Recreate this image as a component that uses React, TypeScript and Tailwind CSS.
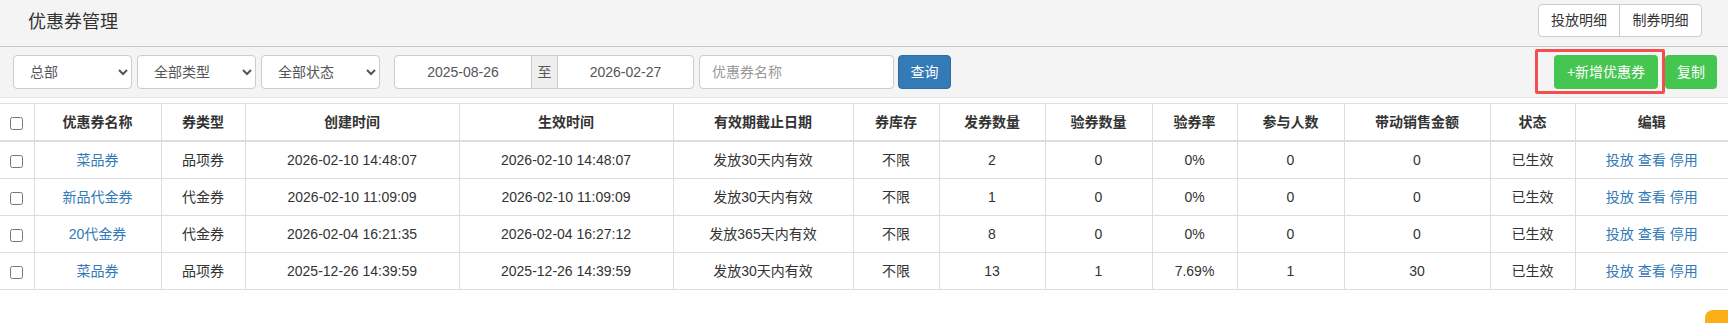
import React from "react";

interface Coupon {
  name: string;
  type: string;
  created: string;
  effective: string;
  expiry: string;
  stock: string;
  issued: number;
  verified: number;
  rate: string;
  people: number;
  sales: number;
  status: string;
}

const coupons: Coupon[] = [
  { name: "菜品券", type: "品项券", created: "2026-02-10 14:48:07", effective: "2026-02-10 14:48:07", expiry: "发放30天内有效", stock: "不限", issued: 2, verified: 0, rate: "0%", people: 0, sales: 0, status: "已生效" },
  { name: "新品代金券", type: "代金券", created: "2026-02-10 11:09:09", effective: "2026-02-10 11:09:09", expiry: "发放30天内有效", stock: "不限", issued: 1, verified: 0, rate: "0%", people: 0, sales: 0, status: "已生效" },
  { name: "20代金券", type: "代金券", created: "2026-02-04 16:21:35", effective: "2026-02-04 16:27:12", expiry: "发放365天内有效", stock: "不限", issued: 8, verified: 0, rate: "0%", people: 0, sales: 0, status: "已生效" },
  { name: "菜品券", type: "品项券", created: "2025-12-26 14:39:59", effective: "2025-12-26 14:39:59", expiry: "发放30天内有效", stock: "不限", issued: 13, verified: 1, rate: "7.69%", people: 1, sales: 30, status: "已生效" },
];

const headers = ["优惠券名称", "券类型", "创建时间", "生效时间", "有效期截止日期", "券库存", "发券数量", "验券数量", "验券率", "参与人数", "带动销售金额", "状态", "编辑"];

const th = "border-x border-t border-b-2 border-[#ddd] px-2 py-2 leading-5 font-bold text-center";
const td = "border border-[#ddd] px-2 py-2 leading-5 text-center";
const ctrl = "h-[34px] border border-[#ccc] rounded-[4px] bg-white text-[14px] text-[#555]";

const Checkbox: React.FC = () => (
  <input type="checkbox" className="w-[13px] h-[13px] align-middle m-0" />
);

const App: React.FC = () => {
  return (
    <div className="relative w-[1728px] h-[323px] bg-white overflow-hidden font-['Liberation_Sans','Noto_Sans_CJK_SC',sans-serif] text-[14px] text-[#333]">
      {/* page title bar */}
      <div className="h-[47px] bg-[#f4f4f4] border-b border-[#c8c8c8] flex items-start justify-between pl-[28px] pr-[26px]">
        <h1 className="mt-[10px] text-[18px] leading-6 text-[#333]">优惠券管理</h1>
        <div className="mt-[4px] flex h-[33px] border border-[#ccc] rounded-[4px] bg-white">
          <button className="w-[81px] border-r border-[#ccc]">投放明细</button>
          <button className="w-[81px]">制券明细</button>
        </div>
      </div>

      {/* filter bar */}
      <div className="relative h-[51px] bg-[#f4f4f4] border-b border-[#e3e3e3] flex items-center pl-[13px] pr-[11px]">
        <select className={`${ctrl} w-[119px] px-3`} defaultValue="总部">
          <option>总部</option>
        </select>
        <select className={`${ctrl} w-[119px] px-3 ml-[5px]`} defaultValue="全部类型">
          <option>全部类型</option>
        </select>
        <select className={`${ctrl} w-[119px] px-3 ml-[5px]`} defaultValue="全部状态">
          <option>全部状态</option>
        </select>
        <div className="ml-[14px] flex h-[34px]">
          <input readOnly value="2025-08-26" className="w-[138px] h-full border border-[#ccc] rounded-l-[4px] bg-white text-center text-[#555]" />
          <span className="w-[25px] h-full border-y border-[#ccc] bg-[#eee] flex items-center justify-center text-[#555]">至</span>
          <input readOnly value="2026-02-27" className="w-[137px] h-full border border-[#ccc] rounded-r-[4px] bg-white text-center text-[#555]" />
        </div>
        <input placeholder="优惠券名称" className={`${ctrl} w-[195px] ml-[5px] px-3 placeholder:text-[#999]`} />
        <button className="ml-[4px] w-[53px] h-[34px] rounded-[4px] bg-[#337ab7] border border-[#2e6da4] text-white">查询</button>

        <div className="ml-auto flex items-center">
          <button className="w-[104px] h-[34px] rounded-[4px] bg-[#45c650] text-white">+新增优惠券</button>
          <button className="ml-[7px] w-[52px] h-[34px] rounded-[4px] bg-[#45c650] text-white">复制</button>
        </div>
        {/* highlight annotation */}
        <div className="absolute left-[1535px] top-[2px] w-[130px] h-[45px] border-[3px] border-[#f24f4f] rounded-[2px] pointer-events-none" />
      </div>

      {/* coupon table */}
      <table className="mt-[5px] w-full table-fixed border-collapse">
        <colgroup>
          <col className="w-[34px]" />
          <col className="w-[127px]" />
          <col className="w-[84px]" />
          <col className="w-[214px]" />
          <col className="w-[214px]" />
          <col className="w-[180px]" />
          <col className="w-[86px]" />
          <col className="w-[106px]" />
          <col className="w-[107px]" />
          <col className="w-[85px]" />
          <col className="w-[107px]" />
          <col className="w-[146px]" />
          <col className="w-[85px]" />
          <col className="w-[153px]" />
        </colgroup>
        <thead>
          <tr>
            <th className={`${th} border-l-0`}>
              <Checkbox />
            </th>
            {headers.map((h, i) => (
              <th key={h} className={`${th} ${i === headers.length - 1 ? "border-r-0" : ""}`}>
                {h}
              </th>
            ))}
          </tr>
        </thead>
        <tbody>
          {coupons.map((c, i) => (
            <tr key={i}>
              <td className={`${td} border-l-0`}>
                <Checkbox />
              </td>
              <td className={td}>
                <a className="text-[#337ab7]">{c.name}</a>
              </td>
              <td className={td}>{c.type}</td>
              <td className={td}>{c.created}</td>
              <td className={td}>{c.effective}</td>
              <td className={td}>{c.expiry}</td>
              <td className={td}>{c.stock}</td>
              <td className={td}>{c.issued}</td>
              <td className={td}>{c.verified}</td>
              <td className={td}>{c.rate}</td>
              <td className={td}>{c.people}</td>
              <td className={td}>{c.sales}</td>
              <td className={td}>{c.status}</td>
              <td className={`${td} border-r-0 text-[#337ab7]`}>
                <a>投放</a> <a>查看</a> <a>停用</a>
              </td>
            </tr>
          ))}
        </tbody>
      </table>

      {/* floating helper tab */}
      <div className="absolute right-0 top-[310px] w-[23px] h-[20px] bg-[#fcaf17] rounded-tl-[8px]" />
    </div>
  );
};

export default App;
